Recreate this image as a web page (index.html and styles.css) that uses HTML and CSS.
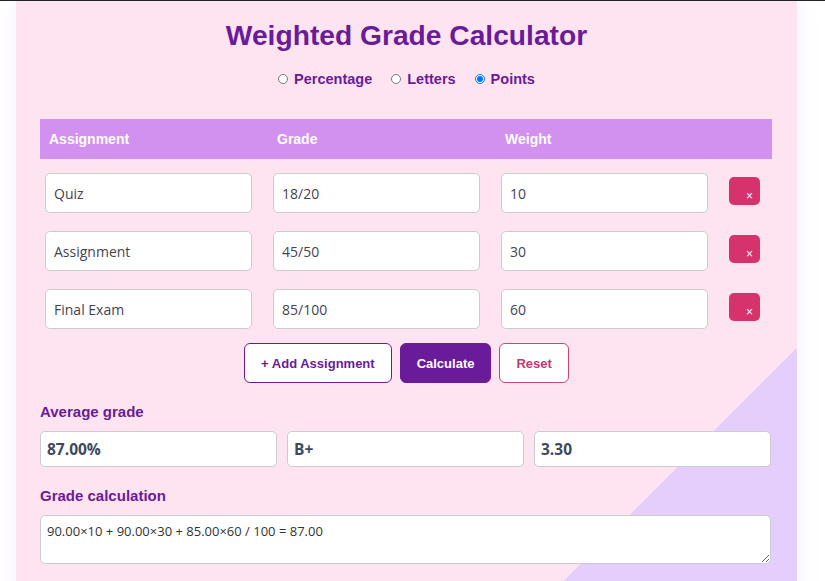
FILE: index.html
```html
<!DOCTYPE html>
<html lang="en">
<head>
<meta charset="utf-8">
<title>Weighted Grade Calculator</title>
<link rel="stylesheet" href="styles.css">
</head>
<body>
<div class="card">
  <h1 class="title">Weighted Grade Calculator</h1>
  <div class="modes">
    <label class="mode"><input type="radio" name="mode"> Percentage</label>
    <label class="mode"><input type="radio" name="mode"> Letters</label>
    <label class="mode"><input type="radio" name="mode" checked> Points</label>
  </div>
  <table class="grades">
    <colgroup>
      <col class="c-main"><col class="c-main"><col class="c-main"><col class="c-del">
    </colgroup>
    <thead>
      <tr><th>Assignment</th><th>Grade</th><th>Weight</th><th></th></tr>
    </thead>
    <tbody>
      <tr>
        <td><input class="field" type="text" value="Quiz"></td>
        <td><input class="field" type="text" value="18/20"></td>
        <td><input class="field" type="text" value="10"></td>
        <td class="del-cell"><button class="del">×</button></td>
      </tr>
      <tr>
        <td><input class="field" type="text" value="Assignment"></td>
        <td><input class="field" type="text" value="45/50"></td>
        <td><input class="field" type="text" value="30"></td>
        <td class="del-cell"><button class="del">×</button></td>
      </tr>
      <tr>
        <td><input class="field" type="text" value="Final Exam"></td>
        <td><input class="field" type="text" value="85/100"></td>
        <td><input class="field" type="text" value="60"></td>
        <td class="del-cell"><button class="del">×</button></td>
      </tr>
    </tbody>
  </table>
  <div class="actions">
    <button class="btn btn-add">+ Add Assignment</button>
    <button class="btn btn-calc">Calculate</button>
    <button class="btn btn-reset">Reset</button>
  </div>
  <div class="label">Average grade</div>
  <div class="results">
    <div class="result">87.00%</div>
    <div class="result">B+</div>
    <div class="result">3.30</div>
  </div>
  <div class="label">Grade calculation</div>
  <textarea class="calc">90.00×10 + 90.00×30 + 85.00×60 / 100 = 87.00</textarea>
</div>
</body>
</html>
```
FILE: styles.css
```css
html, body {
  margin: 0;
  padding: 0;
  background: #ffffff;
}
body {
  border-top: 1px solid #222222;
  font-family: "Liberation Sans", Arial, sans-serif;
  overflow: hidden;
}
.card {
  box-sizing: border-box;
  width: 781px;
  margin-left: 16px;
  padding: 18px 24px 60px;
  background: linear-gradient(135deg, #fee4f1 797px, #e5cdfc 797px);
  box-shadow: 0 0 22px rgba(190, 140, 255, 0.14);
}
.title {
  margin: 0;
  font-size: 28.2px;
  line-height: 32px;
  font-weight: bold;
  color: #6a1b9a;
  text-align: center;
}
.modes {
  margin-top: 19px;
  display: flex;
  justify-content: center;
  gap: 19px;
  line-height: 18px;
}
.mode {
  display: inline-flex;
  align-items: center;
  gap: 6px;
  font-size: 14.5px;
  font-weight: bold;
  color: #6a1b9a;
}
.mode input {
  width: 10px;
  height: 10px;
  margin: 0;
}
.grades {
  margin-top: 31px;
  width: 732px;
  border-collapse: collapse;
  table-layout: fixed;
}
.c-main { width: 228px; }
.c-del { width: 48px; }
.grades th {
  height: 40px;
  padding: 0 9px;
  background: #d291ee;
  color: #ffffff;
  font-size: 14px;
  font-weight: bold;
  text-align: left;
}
.grades td {
  padding: 14px 5px 4px;
  vertical-align: middle;
}
.grades td.del-cell {
  padding-top: 10px;
}
.field {
  box-sizing: border-box;
  width: 95%;
  height: 40px;
  padding: 0 8px;
  border: 1px solid #cccccc;
  border-radius: 5px;
  background: #ffffff;
  font-family: "Open Sans", "Noto Sans", sans-serif;
  font-size: 14px;
  color: #444450;
}
.del {
  box-sizing: border-box;
  width: 31px;
  height: 28px;
  padding: 0 7px 3px 0;
  border: none;
  border-radius: 5px;
  background: #d6336c;
  color: #ffffff;
  font-family: "Liberation Sans", Arial, sans-serif;
  font-size: 12px;
  line-height: 12px;
  display: flex;
  align-items: flex-end;
  justify-content: flex-end;
}
.actions {
  margin-top: 10px;
  display: flex;
  justify-content: center;
  gap: 8px;
}
.btn {
  box-sizing: border-box;
  height: 40px;
  padding: 0 16px;
  border-radius: 6px;
  font-family: "Liberation Sans", Arial, sans-serif;
  font-size: 13px;
  font-weight: bold;
}
.btn-add {
  background: #ffffff;
  border: 1px solid #6a1b9a;
  color: #6a1b9a;
}
.btn-calc {
  background: #6a1b9a;
  border: 1px solid #6a1b9a;
  color: #ffffff;
}
.btn-reset {
  background: #ffffff;
  border: 1px solid #c9457a;
  color: #c2386f;
}
.label {
  margin-top: 20px;
  font-size: 15px;
  line-height: 18px;
  font-weight: bold;
  color: #6a1b9a;
}
.results {
  margin-top: 10px;
  display: grid;
  grid-template-columns: repeat(3, 1fr);
  gap: 10px;
  width: 731px;
}
.result {
  box-sizing: border-box;
  height: 36px;
  padding: 0 6px;
  display: flex;
  align-items: center;
  background: #ffffff;
  border: 1px solid #cccccc;
  border-radius: 5px;
  font-family: "Open Sans", "Noto Sans", sans-serif;
  font-size: 15.5px;
  font-weight: bold;
  color: #3d4a5c;
}
.calc {
  display: block;
  box-sizing: border-box;
  margin-top: 10px;
  width: 731px;
  height: 49px;
  padding: 6px;
  background: #ffffff;
  border: 1px solid #cccccc;
  border-radius: 5px;
  font-family: "Open Sans", "Noto Sans", sans-serif;
  font-size: 13px;
  color: #333333;
}
```
